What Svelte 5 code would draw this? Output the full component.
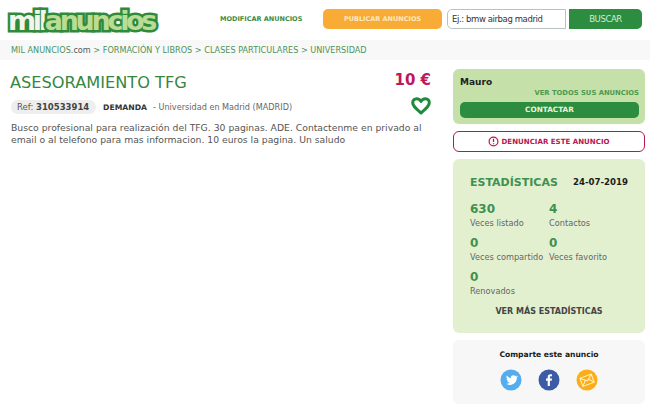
<script>
  let stats = [
    { value: "630", label: "Veces listado" },
    { value: "4", label: "Contactos" },
    { value: "0", label: "Veces compartido" },
    { value: "0", label: "Veces favorito" },
    { value: "0", label: "Renovados" }
  ];
</script>

<div class="page">
  <header class="top">
    <div class="logo"><span class="mil">mil</span><span class="anuncios">anuncios</span></div>
    <a class="modify">MODIFICAR ANUNCIOS</a>
    <a class="publish">PUBLICAR ANUNCIOS</a>
    <div class="search">Ej.: bmw airbag madrid</div>
    <a class="find">BUSCAR</a>
  </header>

  <nav class="crumbs">MIL ANUNCIOS<span class="com">.com</span> &gt; FORMACIÓN Y LIBROS &gt; CLASES PARTICULARES &gt; UNIVERSIDAD</nav>

  <div class="content">
    <main class="ad">
      <div class="title-row">
        <h1>ASESORAMIENTO TFG</h1>
        <div class="price">10 €</div>
      </div>
      <div class="meta-row">
        <span class="ref">Ref: <b>310533914</b></span>
        <b class="kind">DEMANDA</b>
        <span class="place">- Universidad en Madrid (MADRID)</span>
        <svg class="heart" viewBox="0 0 20 18" width="20" height="18">
          <path d="M10 16 C4 11 1.700 8.800 1.700 5.800 C1.700 3.400 3.400 1.700 5.600 1.700 C7.400 1.700 9.100 2.600 10 4.400 C10.900 2.600 12.600 1.700 14.400 1.700 C16.600 1.700 18.300 3.400 18.300 5.800 C18.300 8.800 16 11 10 16 Z" fill="none" stroke="#1f8a3d" stroke-width="3" stroke-linejoin="round" />
        </svg>
      </div>
      <p class="desc">Busco profesional para realización del TFG. 30 paginas. ADE. Contactenme en privado al email o al telefono para mas informacion. 10 euros la pagina. Un saludo</p>
    </main>

    <aside class="side">
      <section class="seller">
        <div class="name">Mauro</div>
        <a class="all">VER TODOS SUS ANUNCIOS</a>
        <a class="contact">CONTACTAR</a>
      </section>

      <a class="report">
        <svg viewBox="0 0 12 12" width="11" height="11">
          <circle cx="6" cy="6" r="4.800" fill="none" stroke="#b5174f" stroke-width="1.300" />
          <path d="M6 3v3.600M6 8v1.100" stroke="#b5174f" stroke-width="1.400" />
        </svg>
        DENUNCIAR ESTE ANUNCIO
      </a>

      <section class="stats">
        <div class="stats-head">
          <h2>ESTADÍSTICAS</h2>
          <b>24-07-2019</b>
        </div>
        <div class="grid">
          {#each stats as s}
            <div class="stat">
              <b>{s.value}</b>
              <span>{s.label}</span>
            </div>
          {/each}
        </div>
        <a class="more">VER MÁS ESTADÍSTICAS</a>
      </section>

      <section class="share">
        <div class="share-title">Comparte este anuncio</div>
        <div class="icons">
          <svg viewBox="0 0 22 22" width="22" height="22">
            <circle cx="11" cy="11" r="10.500" fill="#55acee" />
            <path d="M17 7.200c-.5.2-1 .4-1.400.4.5-.3.9-.8 1.100-1.300-.5.3-1 .5-1.600.6a2.500 2.500 0 0 0-4.200 2.300C9.800 9.100 8 8.100 6.800 6.600c-.7 1.100-.3 2.600.8 3.300-.4 0-.8-.1-1.100-.3 0 1.200.9 2.300 2 2.500-.4.100-.8.100-1.100 0 .3 1 1.200 1.700 2.300 1.700-1 .8-2.300 1.200-3.700 1 1.100.7 2.400 1.100 3.800 1.100 4.600 0 7.200-3.900 7-7.300.5-.4.900-.8 1.200-1.400z" fill="#fff" />
          </svg>
          <svg viewBox="0 0 22 22" width="22" height="22">
            <circle cx="11" cy="11" r="10.500" fill="#3b5ba5" />
            <path d="M11.900 17v-5.300h1.800l.3-2.100h-2.100V8.300c0-.6.200-1 1-1H14V5.400c-.2 0-.8-.1-1.600-.1-1.600 0-2.700 1-2.700 2.800v1.500H8v2.100h1.700V17z" fill="#fff" />
          </svg>
          <svg viewBox="0 0 22 22" width="22" height="22">
            <circle cx="11" cy="11" r="10.500" fill="#fbae17" />
            <g transform="rotate(-20 11 11)" fill="none" stroke="#fff3cf" stroke-width="1">
              <rect x="5" y="7" width="12" height="8.500" />
              <path d="M5 7l6 5 6-5M5 15.500l4.500-5M17 15.500l-4.500-5" />
            </g>
          </svg>
        </div>
      </section>
    </aside>
  </div>
</div>

<style>
  :global(body) {
    background: #fff;
    overflow: hidden;
  }

  .page {
    width: 650px;
    height: 408px;
    overflow: hidden;
    font-family: "DejaVu Sans", Verdana, sans-serif;
    color: #555;
  }

  .top {
    display: flex;
    align-items: center;
    height: 40px;
    padding-left: 5px;
    padding-bottom: 3px;
    box-sizing: border-box;
  }

  .logo {
    width: 153px;
    margin-top: 5px;
    margin-right: 62px;
    font-weight: 700;
    font-size: 27px;
    line-height: 30px;
    letter-spacing: -3.300px;
    white-space: nowrap;
    padding-left: 3px;
    box-sizing: border-box;
  }

  .mil,
  .anuncios {
    -webkit-text-stroke: 5px #2f8b3a;
    paint-order: stroke fill;
  }

  .mil {
    color: #f2f5ee;
  }

  .anuncios {
    color: #b9dc96;
  }

  .modify {
    width: 103px;
    font-size: 6.500px;
    font-weight: 700;
    color: #3b8c46;
    white-space: nowrap;
  }

  .publish {
    width: 119px;
    height: 20px;
    line-height: 20px;
    margin-right: 5px;
    text-align: center;
    font-size: 6.500px;
    font-weight: 700;
    color: #fde9c4;
    background: #f8ab35;
    border-radius: 5px;
  }

  .search {
    width: 119px;
    height: 20px;
    line-height: 18px;
    margin-right: 3px;
    padding-left: 4px;
    box-sizing: border-box;
    font-size: 8.500px;
    letter-spacing: -0.400px;
    color: #333;
    border: 1px solid #b9c2c2;
    border-radius: 5px 0 0 5px;
  }

  .find {
    width: 73px;
    height: 20px;
    line-height: 20px;
    text-align: center;
    font-size: 8.500px;
    letter-spacing: -0.400px;
    color: #d5ecd2;
    background: #2c8c3f;
    border-radius: 0 5px 5px 0;
  }

  .crumbs {
    height: 20px;
    line-height: 20px;
    padding-left: 11px;
    font-size: 8.150px;
    color: #4e9359;
    background: #f8f8f8;
    white-space: nowrap;
  }

  .com {
    color: #555;
  }

  .content {
    display: flex;
    padding-top: 9px;
  }

  .ad {
    width: 420px;
    margin-left: 11px;
    margin-right: 22px;
  }

  .title-row {
    display: flex;
    justify-content: space-between;
    height: 26px;
  }

  h1 {
    margin: 0;
    font-size: 16.200px;
    font-weight: 400;
    line-height: 27px;
    color: #35873f;
    margin-left: -1px;
  }

  .price {
    font-size: 15px;
    font-weight: 700;
    line-height: 22px;
    color: #c0175a;
  }

  .meta-row {
    display: flex;
    align-items: center;
    height: 24px;
    font-size: 8.500px;
  }

  .ref {
    width: 85px;
    height: 14px;
    line-height: 14px;
    box-sizing: border-box;
    padding-left: 6px;
    background: #eeeeee;
    border-radius: 7px;
    white-space: nowrap;
  }

  .ref b {
    color: #444;
  }

  .kind {
    margin-left: 7px;
    margin-right: 6px;
    font-size: 7.700px;
    color: #333;
  }

  .place {
    font-size: 8.150px;
    color: #666;
  }

  .heart {
    margin-left: auto;
    margin-bottom: 2px;
  }

  .desc {
    margin: 3px 0 0;
    width: 415px;
    font-size: 9.250px;
    line-height: 12px;
    color: #555;
  }

  .side {
    width: 192px;
    display: flex;
    flex-direction: column;
    gap: 7px;
  }

  .seller {
    height: 55px;
    box-sizing: border-box;
    padding: 7px 6px 0 7px;
    background: #c5e0a8;
    border-radius: 6px;
  }

  .name {
    font-size: 9px;
    font-weight: 700;
    line-height: 12px;
    color: #222;
  }

  .all {
    display: block;
    font-size: 6.800px;
    font-weight: 700;
    line-height: 10px;
    text-align: right;
    color: #4c9a52;
  }

  .contact {
    display: block;
    height: 16px;
    line-height: 16px;
    margin-top: 4px;
    text-align: center;
    font-size: 7.300px;
    font-weight: 700;
    color: #e6f4df;
    background: #2c8c3f;
    border-radius: 5px;
  }

  .report {
    height: 21px;
    box-sizing: border-box;
    display: flex;
    align-items: center;
    justify-content: center;
    gap: 2px;
    font-size: 7.050px;
    font-weight: 700;
    color: #b5174f;
    border: 1.500px solid #b5174f;
    border-radius: 6px;
  }

  .stats {
    height: 174px;
    box-sizing: border-box;
    padding: 16px 17px 0;
    background: #e2f0d0;
    border-radius: 6px;
  }

  .stats-head {
    display: flex;
    justify-content: space-between;
    align-items: center;
    height: 14px;
  }

  h2 {
    margin: 0;
    font-size: 11px;
    font-weight: 700;
    color: #3f9150;
    white-space: nowrap;
  }

  .stats-head b {
    font-size: 8.600px;
    color: #1c1c1c;
  }

  .grid {
    display: grid;
    grid-template-columns: 79px 1fr;
    margin-top: 13px;
    row-gap: 6px;
  }

  .stat b {
    display: block;
    font-size: 12px;
    line-height: 15px;
    color: #3f9150;
  }

  .stat span {
    display: block;
    font-size: 8.200px;
    line-height: 13px;
    color: #666;
    white-space: nowrap;
  }

  .more {
    display: block;
    margin-top: 9px;
    text-align: center;
    font-size: 8px;
    font-weight: 700;
    color: #444;
  }

  .share {
    height: 64px;
    box-sizing: border-box;
    padding-top: 9px;
    background: #f7f7f7;
    border-radius: 6px;
    text-align: center;
  }

  .share-title {
    font-size: 7.600px;
    font-weight: 700;
    line-height: 12px;
    color: #1c1c1c;
  }

  .icons {
    display: flex;
    justify-content: center;
    gap: 16px;
    margin-top: 8px;
  }
</style>
